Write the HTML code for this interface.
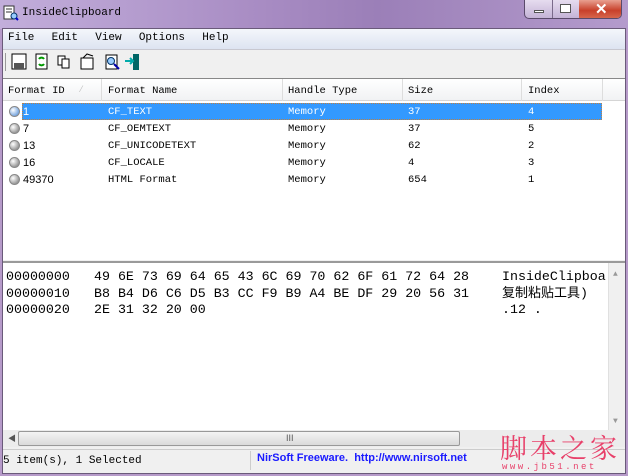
<!DOCTYPE html>
<html><head><meta charset="utf-8"><style>
*{margin:0;padding:0;box-sizing:border-box}
body{width:628px;height:476px;overflow:hidden;background:#b69ac9;position:relative;font-family:"Liberation Mono","Noto Sans CJK SC",monospace}
.a{position:absolute;white-space:nowrap}
.s{font-size:10.5px}
.h{font-size:13.3px;color:#000}
</style></head><body>
<div class="a" style="left:0;top:0;width:628px;height:29px;background:linear-gradient(90deg,#c2aedb 0%,#a98dc4 40%,#9b7fb8 60%,#b49bcc 100%)"></div>
<svg class="a" style="left:3px;top:5px" width="16" height="16"><rect x="1" y="1" width="10" height="13" fill="#fff" stroke="#333"/><line x1="3" y1="4" x2="9" y2="4" stroke="#333"/><line x1="3" y1="7" x2="9" y2="7" stroke="#333"/><circle cx="11" cy="11" r="3" fill="#9cf" stroke="#036"/><line x1="13" y1="13" x2="15" y2="15" stroke="#00c" stroke-width="2"/></svg>
<div class="a s" style="left:22px;top:7px;font-size:11px;color:#000">InsideClipboard</div>
<div class="a" style="left:524px;top:0;width:98px;height:19px;border:1px solid #5a4a6a;border-top:none;border-radius:0 0 5px 5px;background:linear-gradient(#e6dcef,#c4b3d6);overflow:hidden">
<div class="a" style="left:27px;top:0;width:1px;height:19px;background:#7a6a8a"></div>
<div class="a" style="left:54px;top:0;width:44px;height:19px;background:linear-gradient(#e8a090,#c8402a 55%,#d86a50)"></div>
<div class="a" style="left:9px;top:10px;width:10px;height:3px;background:#fff;border:1px solid #555"></div>
<div class="a" style="left:35px;top:4px;width:11px;height:9px;border:1px solid #555;background:#fff"></div>
<div class="a" style="left:70px;top:0px;color:#fff;font:bold 15px 'Liberation Sans'">✕</div>
</div>
<div class="a" style="left:2px;top:28px;width:624px;height:446px;background:#f0f0f0;border:1px solid #6a5a7a"></div>
<div class="a" style="left:3px;top:29px;width:622px;height:20px;background:linear-gradient(#f4f6fb,#dde4f1)"></div>
<div class="a s" style="left:8px;top:32px;font-size:11px;word-spacing:2px">File&nbsp; Edit&nbsp; View&nbsp; Options&nbsp; Help</div>
<div class="a" style="left:3px;top:49px;width:622px;height:1px;background:#c8c8d0"></div>
<div class="a" style="left:5px;top:53px;width:1px;height:18px;background:#999"></div>
<svg class="a" style="left:11px;top:53px" width="130" height="18">
<rect x="1" y="1" width="14" height="15" fill="#fff" stroke="#000"/><rect x="3" y="10" width="10" height="6" fill="#555"/>
<rect x="25" y="1" width="11" height="15" fill="#fff" stroke="#000"/><path d="M28 6a3 3 0 0 1 5 0M33 11a3 3 0 0 1-5 0" stroke="#090" stroke-width="2" fill="none"/>
<rect x="47" y="3" width="7" height="9" fill="#fff" stroke="#000"/><rect x="51" y="6" width="7" height="9" fill="#fff" stroke="#000"/>
<rect x="70" y="5" width="12" height="11" fill="#fff" stroke="#000"/><path d="M72 5l4-4 6 2" stroke="#000" fill="none"/>
<rect x="95" y="2" width="11" height="14" fill="#fff" stroke="#000"/><circle cx="100" cy="8" r="3.5" fill="#9cf" stroke="#036"/><line x1="103" y1="11" x2="108" y2="16" stroke="#00a" stroke-width="2"/>
<rect x="122" y="1" width="6" height="16" fill="#066"/><path d="M114 8h8M119 5l3 3-3 3" stroke="#0aa" stroke-width="2" fill="none"/>
</svg>
<div class="a" style="left:3px;top:78px;width:622px;height:182px;background:#fff;border-top:1px solid #888"></div>
<div class="a" style="left:3px;top:79px;width:622px;height:22px;background:linear-gradient(#fff,#f1f2f4);border-bottom:1px solid #d5d5d5"></div>
<div class="a" style="left:101px;top:79px;width:1px;height:22px;background:#ddd"></div>
<div class="a" style="left:282px;top:79px;width:1px;height:22px;background:#ddd"></div>
<div class="a" style="left:402px;top:79px;width:1px;height:22px;background:#ddd"></div>
<div class="a" style="left:521px;top:79px;width:1px;height:22px;background:#ddd"></div>
<div class="a" style="left:602px;top:79px;width:1px;height:22px;background:#ddd"></div>
<div class="a s" style="left:8px;top:85px">Format ID</div>
<div class="a s" style="left:78px;top:84px;color:#bbb">⁄</div>
<div class="a s" style="left:108px;top:85px">Format Name</div>
<div class="a s" style="left:288px;top:85px">Handle Type</div>
<div class="a s" style="left:408px;top:85px">Size</div>
<div class="a s" style="left:528px;top:85px">Index</div>
<div class="a" style="left:22px;top:103px;width:580px;height:17px;background:#3399ff;border:1px dotted #c08040"></div>
<div id="rows"></div>
<div class="a" style="left:3px;top:261px;width:622px;height:2px;background:#9a9a9a"></div>
<div class="a" style="left:3px;top:263px;width:622px;height:167px;background:#fff"></div>
<div class="a" style="left:608px;top:263px;width:17px;height:167px;background:#f0f0f0;border-left:1px solid #e0e0e0"></div>
<div class="a" style="left:613px;top:270px;font-size:8px;color:#999">▲</div>
<div class="a" style="left:613px;top:417px;font-size:8px;color:#999">▼</div>
<div class="a h" style="left:6px;top:269px;line-height:16.5px">00000000<br>00000010<br>00000020</div>
<div class="a h" style="left:94px;top:269px;line-height:16.5px;white-space:pre">49 6E 73 69 64 65 43 6C 69 70 62 6F 61 72 64 28
B8 B4 D6 C6 D5 B3 CC F9 B9 A4 BE DF 29 20 56 31
2E 31 32 20 00</div>
<div class="a h" style="left:502px;top:269px;line-height:16.5px;white-space:pre">InsideClipboa
<span style="font-size:13px">复制粘贴工具</span>)
.12 .</div>
<div class="a" style="left:3px;top:430px;width:622px;height:17px;background:#ececec"></div>
<div class="a" style="left:8px;top:433px;font-size:8px;color:#555">◀</div>
<div class="a" style="left:18px;top:431px;width:442px;height:15px;border:1px solid #999;border-radius:2px;background:linear-gradient(#f4f4f4,#dadada)"></div>
<div class="a" style="left:286px;top:433px;font-size:9px;color:#555;font-family:'Liberation Sans'">III</div>
<div class="a" style="left:3px;top:449px;width:622px;height:22px;background:#f0f0f0;border-top:1px solid #ccc"></div>
<div class="a" style="left:250px;top:451px;width:1px;height:19px;background:#ccc"></div>
<div class="a s" style="left:3px;top:455px;font-size:11px">5 item(s), 1 Selected</div>
<div class="a" style="left:257px;top:452px;font:bold 11px 'Liberation Sans',sans-serif;color:#1a1aff">NirSoft Freeware.&nbsp; http://www.nirsoft.net</div>
<div class="a" style="left:500px;top:427px;font:27px 'Noto Serif CJK SC','Noto Sans CJK SC',serif;color:#e8406a;letter-spacing:3px">脚本之家</div>
<div class="a" style="left:502px;top:462px;font:9px 'Liberation Mono',monospace;color:#e8406a;letter-spacing:2.5px">www.jb51.net</div>
<script>
var r=[["1","CF_TEXT","Memory","37","4"],["7","CF_OEMTEXT","Memory","37","5"],["13","CF_UNICODETEXT","Memory","62","2"],["16","CF_LOCALE","Memory","4","3"],["49370","HTML Format","Memory","654","1"]],h="";
r.forEach(function(x,i){var t=104+i*17,c=i==0?"#fff":"#000";
h+='<div class="a" style="left:9px;top:'+(t+2)+'px;width:11px;height:11px;border-radius:50%;background:radial-gradient(circle at 35% 35%,#fff,'+(i==0?'#7aa8e0':'#999')+' 70%);border:1px solid #888"></div>';
h+='<div class="a" style="left:23px;top:'+(t+2)+'px;font:11px \'Liberation Sans\';color:'+c+'">'+x[0]+'</div>';
[[108,1],[288,2],[408,3],[528,4]].forEach(function(p){h+='<div class="a s" style="left:'+p[0]+'px;top:'+(t+2)+'px;color:'+c+'">'+x[p[1]]+'</div>'});});
document.getElementById("rows").innerHTML=h;
</script>
</body></html>
